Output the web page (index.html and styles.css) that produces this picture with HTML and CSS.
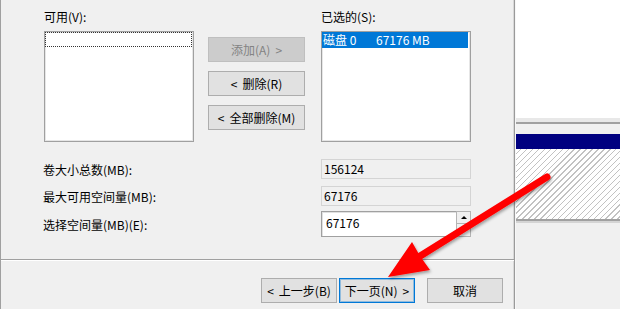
FILE: index.html
```html
<!DOCTYPE html>
<html lang="zh-CN">
<head>
<meta charset="utf-8">
<title>新建简单卷向导</title>
<link rel="stylesheet" href="styles.css">
</head>
<body>
<div class="screen">
  <div class="dialog">
    <div class="top">
      <div class="listcol">
        <div class="label">可用(V):</div>
        <div class="listbox"><div class="focusrow"></div></div>
      </div>
      <div class="btncol">
        <div class="btn disabled">添加(A)<span class="gt">&gt;</span></div>
        <div class="btn"><span class="lt">&lt;</span>删除(R)</div>
        <div class="btn"><span class="lt">&lt;</span>全部删除(M)</div>
      </div>
      <div class="listcol right">
        <div class="label">已选的(S):</div>
        <div class="listbox"><div class="selrow"><span class="disk">磁盘 0</span><span>67176 MB</span></div></div>
      </div>
    </div>
    <div class="fields">
      <div class="row r1">
        <div class="flabel">卷大小总数(MB):</div>
        <div class="ro">156124</div>
      </div>
      <div class="row r2">
        <div class="flabel">最大可用空间量(MB):</div>
        <div class="ro">67176</div>
      </div>
      <div class="row r3">
        <div class="flabel">选择空间量(MB)(E):</div>
        <div class="spin">
          <div class="spininput">67176</div>
          <div class="spinbtns">
            <div class="sb up"><span class="tri-up"></span></div>
            <div class="sb down"><span class="tri-down"></span></div>
          </div>
        </div>
      </div>
    </div>
    <div class="sep"></div>
    <div class="footer">
      <div class="btn wide"><span class="lt">&lt;</span>上一步(B)</div>
      <div class="btn wide default">下一页(N)<span class="gt">&gt;</span></div>
      <div class="btn wide cancel">取消</div>
    </div>
  </div>
  <div class="bgwin">
    <div class="bg-white"></div>
    <div class="bg-band"></div>
    <div class="bg-line"></div>
    <div class="bg-gray"></div>
    <div class="bg-navy"></div>
    <div class="bg-hatch"></div>
    <div class="bg-line2"></div>
    <div class="bg-rest"></div>
  </div>
  <svg class="arrow" width="620" height="309" viewBox="0 0 620 309">
    <defs>
      <filter id="sh" x="-10%" y="-10%" width="130%" height="130%">
        <feDropShadow dx="1" dy="2" stdDeviation="1.5" flood-color="#000" flood-opacity="0.35"/>
      </filter>
    </defs>
    <g filter="url(#sh)">
      <line x1="547" y1="177" x2="417" y2="258" stroke="#ff0000" stroke-width="7" stroke-linecap="round"/>
      <polygon points="388,277 412,242 420,256 430,270" fill="#ff0000"/>
    </g>
  </svg>
</div>
</body>
</html>
```

FILE: styles.css
```css
html, body {
  margin: 0;
  padding: 0;
  background: #f0f0f0;
}
.screen {
  position: relative;
  width: 620px;
  height: 309px;
  overflow: hidden;
  display: flex;
  font-family: "Noto Sans CJK SC", "Microsoft YaHei", sans-serif;
  font-size: 12px;
  color: #000;
}
.dialog {
  box-sizing: border-box;
  width: 515px;
  height: 309px;
  flex: none;
  background: #f0f0f0;
  border-left: 1px solid #a0a0a0;
  border-right: 1px solid #9a9a9a;
  box-shadow: inset -1px 0 0 #d8d8d8;
  display: flex;
  flex-direction: column;
}
.top {
  display: flex;
  padding: 9px 0 0 43px;
}
.listcol {
  width: 150px;
  display: flex;
  flex-direction: column;
}
.listcol.right {
  margin-left: 16px;
}
.label {
  height: 16px;
  line-height: 16px;
  margin-bottom: 6px;
}
.listbox {
  box-sizing: border-box;
  width: 150px;
  height: 111px;
  background: #fff;
  border: 1px solid #a0a0a0;
  box-shadow: inset 0 0 0 1px #e6e6e6;
}
.focusrow {
  box-sizing: border-box;
  width: 147px;
  height: 15px;
  margin: 0;
  border: 1px dotted #333;
}
.selrow {
  display: flex;
  width: 146px;
  height: 16px;
  line-height: 16px;
  background: #0078d7;
  color: #fff;
  padding-left: 1px;
  box-sizing: border-box;
}
.disk {
  width: 53px;
}
.btncol {
  display: flex;
  flex-direction: column;
  gap: 9px;
  margin-left: 14px;
  padding-top: 28px;
}
.btn {
  box-sizing: border-box;
  width: 97px;
  height: 25px;
  line-height: 23px;
  text-align: center;
  background: #e1e1e1;
  border: 1px solid #adadad;
}
.lt {
  margin-right: 5px;
}
.gt {
  margin-left: 5px;
}
.btn.disabled {
  background: #cccccc;
  border-color: #bfbfbf;
  color: #838383;
}
.fields {
  display: flex;
  flex-direction: column;
  padding-left: 42px;
  margin-top: 17px;
}
.row {
  display: flex;
  align-items: center;
}
.r2 {
  margin-top: 7px;
}
.r3 {
  margin-top: 5px;
}
.flabel {
  width: 278px;
}
.ro {
  box-sizing: border-box;
  width: 150px;
  height: 20px;
  line-height: 18px;
  padding-left: 2px;
  background: #f0f0f0;
  border: 1px solid #d4d4d4;
}
.spin {
  display: flex;
  width: 150px;
  height: 26px;
}
.spininput {
  box-sizing: border-box;
  width: 135px;
  height: 26px;
  padding: 3px 0 0 4px;
  line-height: 16px;
  background: #fff;
  border: 1px solid #a0a0a0;
  border-right: none;
  box-shadow: inset 1px 1px 0 #e0e0e0;
}
.spinbtns {
  display: flex;
  flex-direction: column;
  width: 15px;
}
.sb {
  box-sizing: border-box;
  height: 13px;
  background: #f0f0f0;
  border: 1px solid #b4b4b4;
  display: flex;
  align-items: center;
  justify-content: center;
}
.sb.down {
  border-top: none;
}
.tri-up {
  width: 0;
  height: 0;
  border-left: 3px solid transparent;
  border-right: 3px solid transparent;
  border-bottom: 3px solid #000;
}
.tri-down {
  width: 0;
  height: 0;
  border-left: 3px solid transparent;
  border-right: 3px solid transparent;
  border-top: 3px solid #000;
}
.sep {
  margin-top: 22px;
  height: 1px;
  background: #a0a0a0;
  border-bottom: 1px solid #fff;
}
.footer {
  display: flex;
  padding: 17px 0 0 260px;
}
.btn.wide {
  width: 76px;
}
.btn.default {
  margin-left: 2px;
  border-color: #0078d7;
  box-shadow: inset 0 0 0 1px rgba(0, 120, 215, 0.35);
}
.btn.cancel {
  margin-left: 12px;
}
.bgwin {
  flex: 1;
  display: flex;
  flex-direction: column;
  border-left: 1px solid #f7f7f7;
}
.bg-white { height: 118px; background: #fff; }
.bg-band { height: 4px; background: #e8e8e8; }
.bg-line { height: 2px; background: #a0a0a0; }
.bg-gray { height: 10px; background: #f0f0f0; }
.bg-navy { height: 15px; background: #000080; }
.bg-hatch {
  height: 70px;
  background: repeating-linear-gradient(135deg, #ffffff 0 3.2px, #c2c2c2 3.2px 4.2px);
}
.bg-line2 {
  height: 2px;
  background: #a0a0a0;
  border-bottom: 2px solid #d4d4d4;
}
.bg-rest { flex: 1; background: #f0f0f0; }
.arrow {
  position: absolute;
  left: 0;
  top: 0;
  pointer-events: none;
}
```
